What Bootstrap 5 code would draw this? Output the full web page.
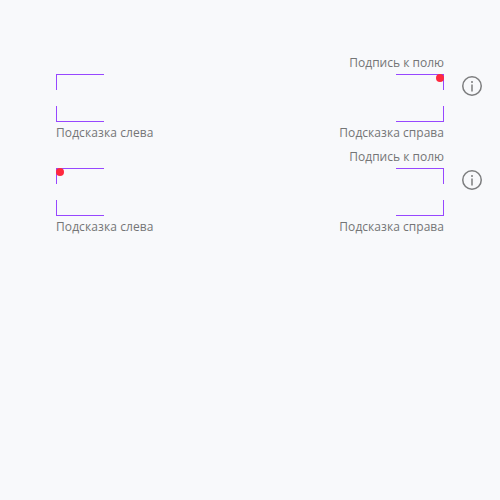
<!DOCTYPE html>
<html lang="ru">
<head>
<meta charset="utf-8">
<meta name="viewport" content="width=device-width, initial-scale=1">
<title>Поля</title>
<link href="https://cdn.jsdelivr.net/npm/bootstrap@5.3.0/dist/css/bootstrap.min.css" rel="stylesheet">
<style>
body { background: #f8f9fb; color: #747576; font-family: "Open Sans", "Noto Sans", sans-serif; font-size: 12px; line-height: 16px; letter-spacing: .09px; }
.fields { padding: 55px 16px 0 56px; gap: 8px; }
.field-box { width: 388px; }
.frame { height: 48px; margin: 3px 0; }
.corner { width: 48px; height: 16px; border: 0 solid #9747ff; }
.edge-t { border-top-width: 1px; }
.edge-b { border-bottom-width: 1px; }
.edge-l { border-left-width: 1px; }
.edge-r { border-right-width: 1px; }
.dot { width: 8px; height: 8px; background: #ff293e; }
.info { margin: 19px 0 0 16px; color: #7c7d7e; }
.caption-line { letter-spacing: 0; }
.hint-end { letter-spacing: .04px; }
</style>
<script src="https://cdn.jsdelivr.net/npm/bootstrap@5.3.0/dist/js/bootstrap.bundle.min.js"></script>
</head>
<body>
<main class="fields d-flex flex-column">
  <section class="d-flex align-items-start">
    <div class="field-box">
      <div class="text-end caption-line">Подпись к полю</div>
      <div class="frame position-relative d-flex flex-column justify-content-between">
        <div class="d-flex justify-content-between"><span class="corner edge-t edge-l"></span><span class="corner edge-t edge-r"></span></div>
        <div class="d-flex justify-content-between"><span class="corner edge-b edge-l"></span><span class="corner edge-b edge-r"></span></div>
        <span class="dot rounded-circle position-absolute top-0 end-0"></span>
      </div>
      <div class="d-flex justify-content-between"><span>Подсказка слева</span><span class="hint-end">Подсказка справа</span></div>
    </div>
    <svg class="info" width="24" height="24" viewBox="0 0 24 24" fill="none" stroke="currentColor" stroke-width="1.5" role="img" aria-label="Информация"><circle cx="12" cy="12" r="9.25"/><path d="M12 10.5v7"/><circle cx="12" cy="8" r="1" fill="currentColor" stroke="none"/></svg>
  </section>
  <section class="d-flex align-items-start">
    <div class="field-box">
      <div class="text-end caption-line">Подпись к полю</div>
      <div class="frame position-relative d-flex flex-column justify-content-between">
        <div class="d-flex justify-content-between"><span class="corner edge-t edge-l"></span><span class="corner edge-t edge-r"></span></div>
        <div class="d-flex justify-content-between"><span class="corner edge-b edge-l"></span><span class="corner edge-b edge-r"></span></div>
        <span class="dot rounded-circle position-absolute top-0 start-0"></span>
      </div>
      <div class="d-flex justify-content-between"><span>Подсказка слева</span><span class="hint-end">Подсказка справа</span></div>
    </div>
    <svg class="info" width="24" height="24" viewBox="0 0 24 24" fill="none" stroke="currentColor" stroke-width="1.5" role="img" aria-label="Информация"><circle cx="12" cy="12" r="9.25"/><path d="M12 10.5v7"/><circle cx="12" cy="8" r="1" fill="currentColor" stroke="none"/></svg>
  </section>
</main>
</body>
</html>
